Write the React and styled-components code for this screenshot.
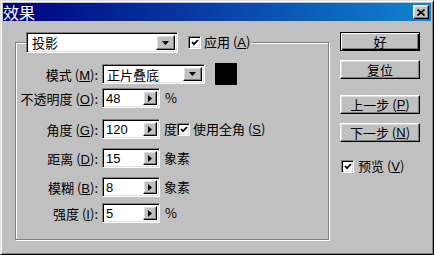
import React from "react";
import styled, { createGlobalStyle } from "styled-components";

const GlobalStyle = createGlobalStyle`
  html, body {
    margin: 0;
    padding: 0;
    background: #c0c0c0;
  }
  body {
    font-family: "Liberation Sans", "Noto Sans CJK SC", sans-serif;
    font-size: 13px;
    color: #000;
  }
`;

const Window = styled.div`
  box-sizing: border-box;
  width: 434px;
  height: 255px;
  padding: 2px;
  display: flex;
  flex-direction: column;
  background: #c0c0c0;
  border: 1px solid;
  border-color: #dfdfdf #000 #000 #dfdfdf;
  box-shadow: inset 1px 1px 0 #fff, inset -1px -1px 0 #808080;
`;

const TitleBar = styled.div`
  height: 18px;
  display: flex;
  align-items: center;
  justify-content: space-between;
  padding: 0 2px 0 0;
  background: linear-gradient(to right, #000080, #1084d0);
`;

const Title = styled.span`
  color: #fff;
  font-family: "Noto Sans CJK SC", sans-serif;
  font-size: 16px;
  line-height: 18px;
`;

const raised = `
  background: #c0c0c0;
  border: 1px solid;
  border-color: #fff #000 #000 #fff;
  box-shadow: inset -1px -1px 0 #808080, inset 1px 1px 0 #dfdfdf;
`;

const sunken = `
  background: #fff;
  border: 1px solid;
  border-color: #808080 #fff #fff #808080;
  box-shadow: inset 1px 1px 0 #000, inset -1px -1px 0 #dfdfdf;
`;

const CloseButton = styled.div`
  box-sizing: border-box;
  width: 16px;
  height: 14px;
  display: flex;
  align-items: center;
  justify-content: center;
  ${raised}
`;

const Body = styled.div`
  flex: 1;
  display: flex;
  align-items: flex-start;
  gap: 11px;
  padding: 11px 0 0 12px;
`;

const Group = styled.fieldset`
  box-sizing: border-box;
  width: 314px;
  height: 208px;
  min-inline-size: 0;
  margin: 0;
  padding: 0;
  border: 1px solid #808080;
  box-shadow: inset 1px 1px 0 #fff, 1px 1px 0 #fff;
`;

const Legend = styled.legend`
  display: flex;
  align-items: center;
  margin-left: 10px;
  padding: 0 1px 0 0;
  background: #c0c0c0;
`;

const Select = styled.div`
  box-sizing: border-box;
  width: ${(p) => p.$w}px;
  height: ${(p) => p.$h}px;
  display: flex;
  align-items: stretch;
  padding: 2px;
  ${sunken}
`;

const Value = styled.span`
  flex: 1;
  display: flex;
  align-items: center;
  padding-left: ${(p) => p.$pad ?? 2}px;
  font-family: "Noto Sans CJK SC", sans-serif;
  font-size: 13px;
  line-height: 1;
`;

const NumValue = styled(Value)`
  font-family: "Liberation Sans", sans-serif;
  padding-left: 1px;
`;

const ArrowButton = styled.div`
  box-sizing: border-box;
  width: ${(p) => p.$w}px;
  display: flex;
  align-items: center;
  justify-content: center;
  ${raised}
`;

const Check = styled.div`
  box-sizing: border-box;
  width: 13px;
  height: 13px;
  flex: none;
  display: flex;
  align-items: center;
  justify-content: center;
  ${sunken}
`;

const Text = styled.span`
  font-family: "Noto Sans CJK SC", sans-serif;
  font-size: 13px;
  line-height: 16px;
  white-space: nowrap;
  margin-left: ${(p) => p.$ml ?? 0}px;

  u {
    font-family: "Liberation Sans", sans-serif;
  }
`;

const Rows = styled.div`
  display: flex;
  flex-direction: column;
`;

const Row = styled.div`
  display: grid;
  grid-template-columns: 82px auto;
  column-gap: 4px;
  align-items: center;
  height: 20px;
  margin-top: ${(p) => p.$mt}px;
`;

const Label = styled.span`
  justify-self: end;
  font-family: "Noto Sans CJK SC", sans-serif;
  font-size: 13px;
  white-space: nowrap;

  u {
    font-family: "Liberation Sans", sans-serif;
  }
`;

const Controls = styled.div`
  display: flex;
  align-items: center;
`;

const Swatch = styled.div`
  width: 22px;
  height: 22px;
  margin-left: 10px;
  background: #000;
`;

const Side = styled.div`
  width: 80px;
  display: flex;
  flex-direction: column;
`;

const Button = styled.div`
  box-sizing: border-box;
  height: 19px;
  margin-top: ${(p) => p.$mt ?? 0}px;
  display: flex;
  align-items: center;
  justify-content: center;
  font-family: "Noto Sans CJK SC", sans-serif;
  font-size: 13px;
  ${raised}
  ${(p) =>
    p.$default &&
    `
    border: 1px solid #000;
    box-shadow: inset 1px 1px 0 #fff, inset -1px -1px 0 #000, inset -2px -2px 0 #808080;
  `}

  u {
    font-family: "Liberation Sans", sans-serif;
  }
`;

const CheckRow = styled.div`
  display: flex;
  align-items: center;
  margin-top: ${(p) => p.$mt ?? 0}px;
  margin-left: ${(p) => p.$ml ?? 0}px;
`;

const DownArrow = () => (
  <svg width="7" height="4" viewBox="0 0 7 4">
    <path d="M0 0H7L3.5 4Z" fill="#000" />
  </svg>
);

const RightArrow = () => (
  <svg width="4" height="7" viewBox="0 0 4 7">
    <path d="M0 0V7L4 3.5Z" fill="#000" />
  </svg>
);

const Tick = () => (
  <svg width="8" height="7" viewBox="0 0 8 7">
    <path d="M1 3L3 5.2L7 1" stroke="#000" strokeWidth="1.8" fill="none" />
  </svg>
);

const CloseX = () => (
  <svg width="8" height="7" viewBox="0 0 8 7">
    <path d="M0.5 0.5L7.5 6.5M7.5 0.5L0.5 6.5" stroke="#000" strokeWidth="1.6" />
  </svg>
);

const Dropdown = ({ value, w, h = 20, pad }) => (
  <Select $w={w} $h={h}>
    <Value $pad={pad}>{value}</Value>
    <ArrowButton $w={19}>
      <DownArrow />
    </ArrowButton>
  </Select>
);

const Spinner = ({ value }) => (
  <Select $w={58} $h={20}>
    <NumValue>{value}</NumValue>
    <ArrowButton $w={14}>
      <RightArrow />
    </ArrowButton>
  </Select>
);

const Hot = ({ text, k, colon }) => (
  <>
    {text}
    {" ("}
    <u>{k}</u>
    {")"}
    {colon ? ":" : ""}
  </>
);

export default function App() {
  return (
    <>
      <GlobalStyle />
      <Window>
        <TitleBar>
          <Title>效果</Title>
          <CloseButton>
            <CloseX />
          </CloseButton>
        </TitleBar>
        <Body>
          <Group>
            <Legend>
              <Dropdown value="投影" w={152} h={21} pad={3} />
              <CheckRow $ml={10}>
                <Check>
                  <Tick />
                </Check>
                <Text $ml={3}>
                  <Hot text="应用" k="A" />
                </Text>
              </CheckRow>
            </Legend>
            <Rows>
              <Row $mt={10}>
                <Label>
                  <Hot text="模式" k="M" colon />
                </Label>
                <Controls>
                  <Dropdown value="正片叠底" w={103} />
                  <Swatch />
                </Controls>
              </Row>
              <Row $mt={5}>
                <Label>
                  <Hot text="不透明度" k="O" colon />
                </Label>
                <Controls>
                  <Spinner value="48" />
                  <Text $ml={5}>%</Text>
                </Controls>
              </Row>
              <Row $mt={11}>
                <Label>
                  <Hot text="角度" k="G" colon />
                </Label>
                <Controls>
                  <Spinner value="120" />
                  <Text $ml={4}>度</Text>
                  <Check>
                    <Tick />
                  </Check>
                  <Text $ml={3}>
                    <Hot text="使用全角" k="S" />
                  </Text>
                </Controls>
              </Row>
              <Row $mt={9}>
                <Label>
                  <Hot text="距离" k="D" colon />
                </Label>
                <Controls>
                  <Spinner value="15" />
                  <Text $ml={4}>象素</Text>
                </Controls>
              </Row>
              <Row $mt={9}>
                <Label>
                  <Hot text="模糊" k="B" colon />
                </Label>
                <Controls>
                  <Spinner value="8" />
                  <Text $ml={4}>象素</Text>
                </Controls>
              </Row>
              <Row $mt={6}>
                <Label>
                  <Hot text="强度" k="I" colon />
                </Label>
                <Controls>
                  <Spinner value="5" />
                  <Text $ml={5}>%</Text>
                </Controls>
              </Row>
            </Rows>
          </Group>
          <Side>
            <Button $default>好</Button>
            <Button $mt={9}>复位</Button>
            <Button $mt={16}>
              <Hot text="上一步" k="P" />
            </Button>
            <Button $mt={9}>
              <Hot text="下一步" k="N" />
            </Button>
            <CheckRow $mt={16} $ml={1}>
              <Check>
                <Tick />
              </Check>
              <Text $ml={4}>
                <Hot text="预览" k="V" />
              </Text>
            </CheckRow>
          </Side>
        </Body>
      </Window>
    </>
  );
}
